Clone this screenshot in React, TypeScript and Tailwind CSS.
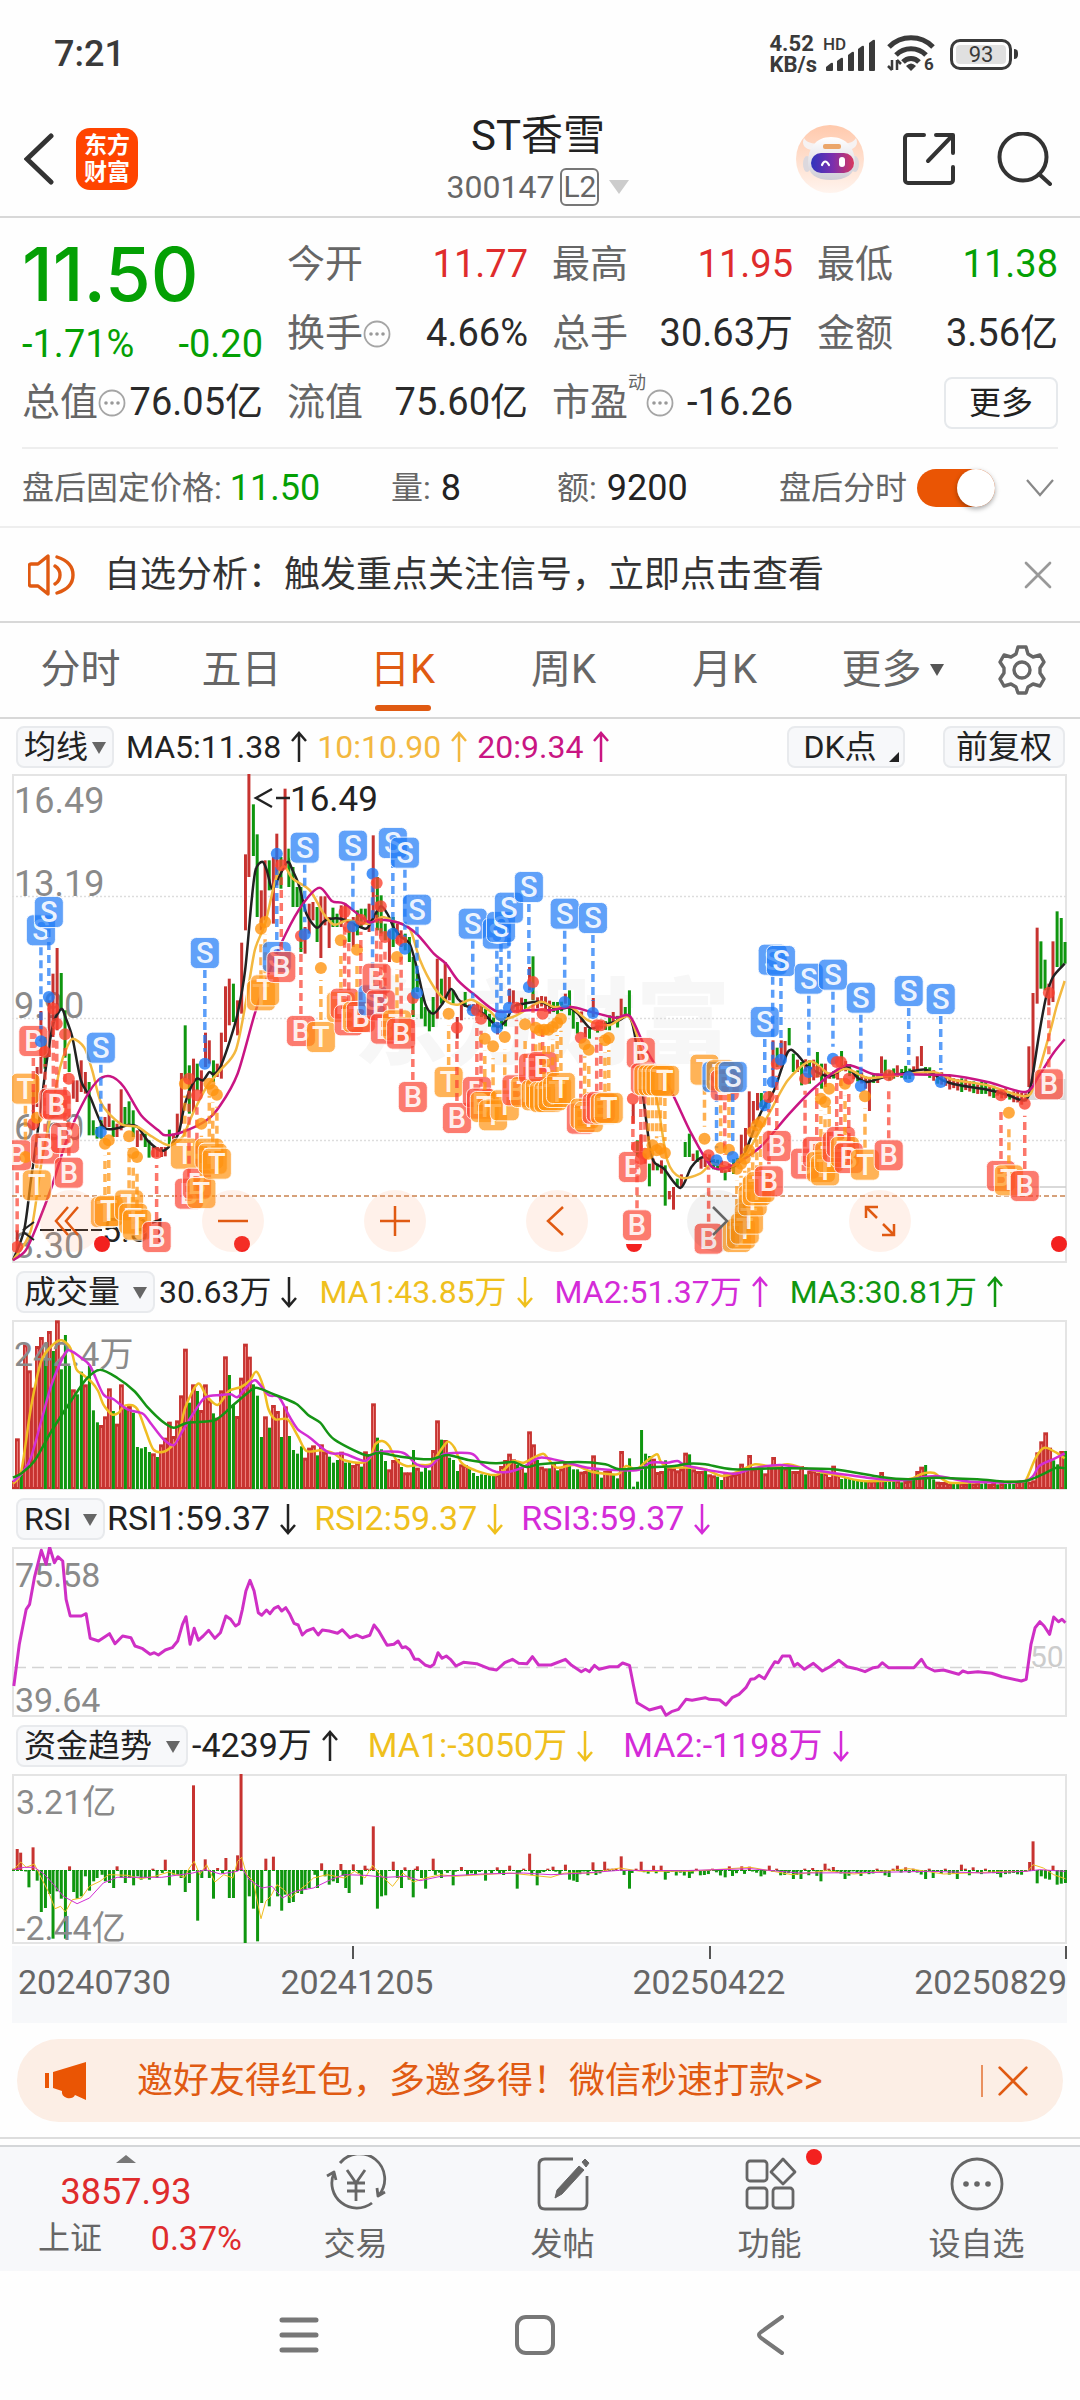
import type { ReactNode } from "react"

type Point = [number, number]
type Kind = "S" | "B" | "T"
type Marker = [Kind, number, number, number]

const RED = "#c73330"
const GREEN = "#0f960f"

// "x,y x,y ..." where a leading + shifts x by half a chart
function parse(src: string): Point[] {
  return src
    .trim()
    .split(/\s+/)
    .map((pair) => {
      const [x, y] = pair.split(",")
      return [x.startsWith("+") ? 1568 + Number(x) : Number(x), Number(y)] as Point
    })
}

// raw samples -> svg units of a 1055 wide panel
const px = (x: number) => (x - 35) / 2.904
const py = (y: number) => (y - 11) / 3
const vy = (y: number) => (y - 177) / 3
const wx = (x: number) => x / 1.452 - 12

function straight(points: Point[]) {
  return points.map(([x, y], i) => `${i ? "L" : "M"}${x.toFixed(1)} ${y.toFixed(1)}`).join("")
}

function smooth(points: Point[]) {
  let d = `M${points[0][0].toFixed(1)} ${points[0][1].toFixed(1)}`
  for (let i = 1; i < points.length; i++) {
    const p0 = points[i - 2] ?? points[i - 1]
    const p1 = points[i - 1]
    const p2 = points[i]
    const p3 = points[i + 1] ?? p2
    const c = [
      p1[0] + (p2[0] - p0[0]) / 7,
      p1[1] + (p2[1] - p0[1]) / 7,
      p2[0] - (p3[0] - p1[0]) / 7,
      p2[1] - (p3[1] - p1[1]) / 7,
      p2[0],
      p2[1],
    ].map((n) => n.toFixed(1))
    d += `C${c.join(" ")}`
  }
  return d
}

const noise = (n: number) => {
  const v = Math.sin(n * 127.1) * 43758.5453
  return v - Math.floor(v)
}

const MA5 = parse(`38,1470 70,1380 90,1230 110,1080 135,880 155,760 178,716 190,740 210,800 235,930 262,980
  300,1070 340,1074 372,1064 400,1070 430,1112 470,1142 500,1120 520,1085 535,1010 555,950 572,925 590,930
  608,905 620,912 640,890 668,810 690,730 712,600 730,400 742,300 762,274 775,300 790,355 810,320 835,275
  850,300 870,350 890,430 920,472 945,450 990,445 1060,475 1080,450 1105,408 1125,430 1145,475 1165,500
  1190,520 1210,590 1235,700 1258,730 1285,700 1310,656 1330,685 1350,705 1390,720 1420,745 1445,770
  1470,750 1490,710 1520,700 1568,695 +50,715 +85,712 +110,730 +145,773 +180,765 +230,750 +258,736
  +275,790 +300,980 +325,1160 +360,1195 +408,1253 +440,1190 +475,1160 +520,1185 +560,1190 +590,1160
  +640,1030 +680,960 +720,845 +745,850 +780,890 +840,918 +890,890 +920,920 +950,935 +1000,920 +1050,910
  +1120,898 +1170,930 +1220,945 +1300,958 +1360,975 +1408,990 +1425,950 +1450,790 +1470,680 +1490,620 +1524,580`)

const MA10 = parse(`38,1470 90,1380 120,1180 150,1020 175,890 195,830 212,805 245,832 268,900 295,1000 350,1060
  400,1070 440,1098 490,1125 530,1100 560,1030 600,950 640,900 685,840 715,690 740,540 770,460 800,330
  825,288 850,325 900,360 940,430 970,463 1010,450 1070,460 1110,440 1150,455 1190,475 1220,570 1260,650
  1300,695 1330,703 1370,688 1420,720 1450,747 1500,735 1568,695 +40,710 +90,710 +140,750 +200,765 +260,740
  +300,860 +340,990 +370,1170 +410,1222 +465,1210 +500,1180 +550,1190 +600,1150 +660,1040 +720,930 +785,873
  +840,910 +890,895 +950,922 +1010,918 +1140,905 +1200,928 +1300,945 +1410,978 +1440,930 +1480,790 +1500,710 +1524,632`)

const MA20 = parse(`38,1470 75,1440 110,1360 150,1250 190,1120 235,1010 280,935 320,918 360,950 410,1035 460,1080
  480,1095 530,1085 600,1050 640,1005 690,910 740,730 780,610 830,490 880,400 928,352 965,393 1000,400
  1070,455 1100,448 1160,458 1210,490 1260,550 1295,580 1330,630 1380,675 1440,722 1500,722 1568,718 +30,720
  +90,710 +150,725 +220,742 +262,738 +310,840 +380,960 +440,1090 +500,1190 +560,1185 +640,1130 +720,1035
  +800,950 +890,885 +970,912 +1060,912 +1190,915 +1300,935 +1410,965 +1450,915 +1490,850 +1524,807`)

// colour, x, high, low
const KEY_CANDLES = `r,50,1380,1450 r,97,960,1080 r,108,890,1010 r,119,722,910 g,131,800,895 r,143,690,860 r,154,610,800 r,166,533,780
  g,178,608,720 g,189,720,862 g,201,850,905 r,213,930,985 r,224,930,995 r,236,870,965 r,248,905,970
  g,259,935,1095 g,271,1050,1095 g,282,1070,1105 g,294,1050,1105 r,305,1040,1075 r,317,1000,1070
  g,329,1050,1100 r,340,1060,1100 r,352,957,1080 g,363,1010,1070 g,375,993,1070 g,387,1020,1100
  r,399,1080,1130 r,410,1090,1110 g,422,1090,1130 g,433,1110,1162 r,445,1130,1160 r,457,1130,1160
  r,469,1130,1160 r,480,1130,1158 g,492,1078,1130 r,504,1090,1120 r,515,1030,1090 r,527,908,1060
  g,538,765,930 g,550,885,1030 r,562,865,1025 g,573,880,960 r,585,900,970 r,597,787,890 r,608,810,880
  g,620,870,935 r,631,880,920 r,643,787,925 r,655,648,815 r,666,625,765 g,678,640,755 r,690,690,795
  r,702,517,730 r,713,252,480 r,723,11,320 g,736,102,257 g,747,192,440 r,759,360,480 r,770,270,450
  g,782,270,360 r,794,260,460 r,804,190,345 g,816,260,355 r,828,55,290 g,839,235,350 g,851,290,410
  g,863,350,410 g,874,350,545 r,886,470,550 r,898,400,490 r,909,395,450 g,921,410,515 r,932,378,563
  r,944,378,465 r,956,440,533 g,967,412,470 g,979,430,470 r,991,405,470 r,1003,400,450 g,1014,450,515
  r,1026,440,530 g,1038,420,495 g,1049,415,470 g,1061,415,460 r,1072,400,485 r,1084,195,450 g,1096,320,480
  g,1107,375,490 g,1119,460,510 r,1131,480,575 g,1142,440,530 r,1154,460,520 r,1165,480,530 g,1177,490,540
  g,1189,500,575 g,1200,560,740 g,1212,600,665 g,1224,680,745 g,1235,710,768 g,1247,720,783 g,1258,680,770
  r,1270,565,745 g,1282,625,700 r,1293,575,690 r,1305,620,690 g,1316,660,700 r,1328,740,805 r,1340,690,750
  g,1351,665,710 r,1480,655,700 r,1491,660,700 r,1538,590,660 g,1548,558,690 r,+74,670,700 g,+86,660,735
  g,+97,720,775 g,+109,755,790 r,+132,770,800 g,+144,775,805 r,+155,683,740 r,+213,725,760 r,+236,685,745
  g,+248,710,740 g,+260,660,740 r,+271,1000,1060 g,+283,1110,1170 r,+294,1092,1150 r,+306,1150,1180
  g,+318,1180,1248 r,+329,1165,1200 g,+341,1180,1200 r,+353,1170,1210 g,+364,1185,1306 r,+376,1262,1287
  r,+388,1250,1318 g,+399,1225,1250 r,+411,1212,1250 g,+422,1115,1160 g,+434,1090,1160 r,+445,1150,1172
  g,+457,1140,1175 r,+468,1160,1195 r,+480,1150,1190 g,+538,1200,1230 r,+550,1180,1205 r,+585,1093,1170
  r,+597,1073,1150 r,+608,963,1090 r,+620,992,1060 r,+632,968,1020 g,+643,968,1010 r,+677,810,950
  g,+689,832,890 r,+701,810,890 r,+712,812,865 g,+724,773,825 g,+736,850,905 r,+748,868,905 g,+760,875,945
  g,+783,870,940 r,+795,868,930 g,+806,845,920 g,+818,880,955 r,+829,880,950 g,+876,842,900 r,+957,925,1022
  r,+992,858,910 g,+1003,868,915 r,+1038,885,920 r,+1096,858,900 r,+1108,827,887 g,+1120,890,910
  r,+1420,828,950 r,+1432,668,940 r,+1444,472,700 g,+1455,513,655 g,+1467,568,660 r,+1478,640,705
  r,+1490,513,695 g,+1502,423,590 g,+1514,443,590 g,+1525,515,580`
  .split(/\s+/)
  .map((row) => {
    const [c, x, high, low] = row.split(",")
    return { color: c === "r" ? RED : GREEN, x: x.startsWith("+") ? 1568 + Number(x) : Number(x), high: Number(high), low: Number(low) }
  })

function valueAt(points: Point[], x: number) {
  const i = Math.max(1, points.findIndex((p) => p[0] >= x))
  const [x0, y0] = points[i - 1]
  const [x1, y1] = points[i]
  return y0 + ((y1 - y0) * (x - x0)) / (x1 - x0)
}

// quiet days hug the five day average
const QUIET_CANDLES = Array.from({ length: 263 }, (_, i) => 39 + i * 11.62)
  .filter((x) => x > 1340 && x < 3080 && !KEY_CANDLES.some((c) => Math.abs(c.x - x) < 8))
  .map((x, i) => {
    const mid = valueAt(MA5, x)
    return { color: noise(i + 4) > 0.5 ? RED : GREEN, x, high: mid - 8 - noise(i) * 16, low: mid + 8 + noise(i + 50) * 16 }
  })

const CANDLES = [...KEY_CANDLES, ...QUIET_CANDLES]

// x, badge y, signal y
const SIGNALS: Record<Kind, string> = {
  S: `119,480,813 142,425,680 293,832,1085 595,548,880 804,560,250 885,232,492 1025,226,468 1141,218,490
    1176,247,535 1211,418,668 1082,690,310 1373,460,720 1443,490,772 1455,470,735 1478,412,712 1536,350,650
    +72,430,695 +154,443,728 +513,920,1170 +560,920,1160 +653,755,1005 +676,568,935 +700,572,868
    +781,625,905 +851,613,865 +932,682,947 +1071,662,920 +1164,686,935`,
  B: `50,1155,1430 97,812,1060 131,1135,845 155,1000,715 165,1003,760 189,1103,792 200,1207,925
    455,1400,1148 549,1270,925 572,1240,975 817,590,285 874,782,497 1001,700,425 1013,750,470 1048,740,448
    1094,625,338 1106,705,408 1118,775,500 1165,790,510 1199,980,683 1327,1043,772 1385,965,720
    1397,1000,745 1500,960,712 1548,895,635 +8,890,730 +119,1045,802 +165,1015,765 +177,1010,765
    +270,1190,985 +282,1365,1130 +293,848,1165 +305,925,1150 +490,1405,1155 +537,945,1190 +665,1233,980
    +688,1127,880 +770,1180,925 +804,1145,905 +862,1130,875 +874,1115,875 +897,1163,925 +1013,1155,915
    +1339,1217,975 +1408,1247,1000 +1478,942,667`,
  T: `74,955,1160 107,1245,1042 305,1325,1120 316,1322,1110 375,1305,1098 387,1345,1148 398,1363,1160
    537,1150,940 585,1268,1060 608,1150,940 618,1165,960 630,1180,973 758,675,475 770,660,455 932,800,593
    990,710,510 1037,740,538 1153,765,560 1303,935,730 1408,1010,805 1432,1035,828 1466,1005,800
    1525,965,762 1556,975,772 +0,970,780 +12,980,778 +25,980,778 +37,975,770 +50,965,758 +61,953,745
    +130,1030,822 +142,1040,838 +189,1015,810 +200,1013,803 +315,930,1150 +327,930,1125 +339,930,1140
    +350,930,1135 +363,932,1148 +478,898,1105 +525,915,1133 +549,920,1138 +572,1400,1195 +584,1390,1180
    +595,1375,1165 +607,1345,1140 +618,1290,1085 +630,1260,1065 +641,1250,1055 +816,1190,985 +828,1200,995
    +840,1160,955 +886,1145,940 +944,1183,978 +1362,1230,1027`,
}

const SIGNAL_COLORS: Record<Kind, string> = { S: "#1c79f7", B: "#fb4332", T: "#ff930f" }

const MARKERS: Marker[] = (Object.keys(SIGNALS) as Kind[])
  .flatMap((kind) =>
    SIGNALS[kind].split(/\s+/).map((row): Marker => {
      const [x, badge, dot] = row.split(",")
      return [kind, x.startsWith("+") ? 1568 + Number(x) : Number(x), Number(badge), Number(dot)]
    }),
  )
  .sort((a, b) => a[1] - b[1])

// colour + bar top, one per trading day
const VOLUME = `r660 r532 g640 r250 r328 r380 r255 r228 g290 r210 g270 r178 g325 g222 g315 r385 g400 g332 r370 g315
  g448 g484 r492 r466 r382 g450 r488 r370 g440 r435 g455 g558 g562 g558 g573 r577 g588 r550 r530 r482 r525
  r478 r403 r263 g425 r370 g390 r447 r370 r418 g457 r470 r388 r286 g342 g430 r465 r350 r248 r287 g370 g404
  g528 r466 g500 r432 r450 g528 r436 g525 g567 g578 g556 r590 r560 r553 g583 r550 r572 g587 g605 g597 r572
  g605 g603 r612 r605 g617 r571 g580 r427 g530 g565 g600 r625 r597 r594 g618 r634 r634 g567 r620 g632 g614
  g628 r567 r478 g536 r537 g590 g597 g630 r610 r612 g618 g636 g645 g640 g642 g642 g642 r640 r615 r597 r578
  r595 g612 r617 g635 r511 r550 g597 r617 r622 g622 r603 g628 r622 r605 g610 g625 g625 r632 r630 g632 r583
  g628 g650 r630 r630 g640 g652 r570 g625 g592 g677 g662 g507 g578 g585 r593 r633 r630 g598 r620 r622 r628
  r622 r575 g580 r625 r630 r630 g625 r640 r643 g647 g657 r640 r640 r640 r636 r608 r620 r582 r622 r618 g618
  r637 r615 r588 r612 g612 r620 g622 r630 r630 r615 g640 r630 r628 r635 g637 r636 r648 r614 r640 g654 g648
  g654 g654 g658 g660 g663 r658 r658 g663 r633 g655 g658 g658 r658 g664 r660 r658 g655 r630 r617 g612 g650
  g655 r662 r663 r663 r668 g665 g668 r665 r668 g664 r667 r664 g668 g666 r669 r666 g670 r667 g669 g666 g668
  r660 r657 g663 r662 r658 r574 r541 r514 r560 g598 g610 r570 g570 r592 g620`
  .split(/\s+/)
  .map((s) => ({ up: s[0] === "r", top: Number(s.slice(1)) }))

const VOL_MA1 = parse(`38,668 62,630 90,440 120,300 155,250 180,238 205,262 222,325 240,340 265,362 285,390 300,430
  325,460 345,455 360,435 385,433 402,450 420,500 445,565 475,572 505,550 520,525 538,440 575,368 600,405
  632,432 665,390 700,378 725,360 745,332 765,378 780,445 800,475 835,475 865,525 890,570 930,568 965,575
  1000,598 1050,605 1075,590 1090,550 1110,540 1130,555 1150,595 1180,615 1215,612 1250,610 1275,575
  1300,542 1320,560 1340,605 1380,628 1440,642 1470,620 1490,600 1520,605 1550,590 +10,578 +25,595 +50,620
  +100,612 +150,632 +225,640 +250,615 +280,625 +310,600 +340,580 +350,600 +370,618 +440,620 +480,625
  +530,645 +580,630 +625,610 +680,618 +720,610 +780,625 +850,640 +940,660 +1070,655 +1110,638 +1145,636
  +1190,665 +1300,662 +1400,662 +1415,650 +1440,590 +1465,560 +1500,575 +1524,592`)

const VOL_MA2 = parse(`38,662 65,635 90,590 120,480 150,370 190,275 210,272 235,290 262,315 300,400 330,415 370,445
  415,458 440,490 475,535 505,552 530,510 560,460 595,410 640,402 670,400 690,408 715,380 742,358 780,402
  810,408 840,465 865,505 900,530 955,575 1000,578 1060,600 1090,575 1170,575 1210,610 1250,615 1290,580
  1370,578 1400,610 1440,632 1480,632 1520,618 1568,590 +60,600 +150,622 +280,628 +320,605 +370,605
  +400,600 +430,615 +560,638 +620,622 +700,612 +800,628 +950,650 +1050,658 +1150,645 +1250,662 +1410,660
  +1450,615 +1490,595 +1524,577`)

const VOL_MA3 = parse(`38,650 65,635 100,600 150,510 200,430 250,355 290,326 340,350 390,390 430,440 470,480 505,500
  545,485 625,477 680,430 720,395 745,380 800,402 860,428 895,462 930,485 970,535 1060,582 1100,575
  1170,588 1250,595 1300,582 1360,597 1440,607 1490,603 1530,618 1568,610 +110,603 +190,610 +230,625
  +300,620 +390,615 +430,608 +480,610 +560,625 +700,622 +850,625 +990,648 +1070,655 +1150,650 +1270,655
  +1350,662 +1410,660 +1460,640 +1500,620 +1524,622`)

const RSI = parse(`20,555 28,430 38,325 43,310 50,230 60,148 67,190 72,138 79,185 84,167 91,180 96,295 102,345 118,345
  125,338 131,412 143,420 159,398 167,428 178,405 190,410 196,435 207,443 218,460 224,455 230,462 240,447
  250,440 258,420 265,370 270,347 276,430 282,382 288,418 295,405 303,388 312,412 320,395 328,345 335,355
  342,375 347,368 352,325 357,270 363,238 369,270 375,335 380,343 387,327 392,338 398,322 404,316 409,330
  415,320 421,340 427,367 433,372 439,402 445,390 455,382 462,402 468,387 478,390 490,397 497,386 508,410
  518,402 526,410 537,403 543,372 550,390 562,433 572,430 578,420 584,440 589,437 595,447 602,475 608,475
  618,493 625,497 630,490 636,455 642,472 648,465 654,475 662,495 673,484 692,488 710,503 721,507 733,485
  744,475 753,487 765,488 773,467 782,492 800,492 821,475 830,493 844,512 850,505 856,512 863,493 870,505
  885,497 897,497 904,486 914,493 920,555 925,605 943,627 960,617 967,643 975,632 985,625 996,595 1005,598
  1024,590 1030,595 1045,597 1054,612 1063,590 1073,580 1083,560 1090,535 1096,533 1102,523 1110,533
  1118,505 1125,482 1130,485 1136,465 1147,465 1153,495 1158,487 1168,505 1181,487 1194,510 1205,497
  1218,478 1230,497 1243,503 1256,512 1268,500 1275,498 1281,485 1290,500 1327,500 1338,475 1345,498
  1357,510 1370,507 1392,520 1398,510 1405,515 1420,512 1440,517 1455,527 1483,540 1490,535 1497,430
  1503,380 1510,362 1516,375 1524,400 1530,348 1537,362 1542,355 1547,365`)

const FLOW = parse(`25,413 30,424 48,408 101,465 170,465 222,472 240,445 281,222 298,444 316,470 328,440 345,432 350,188
  386,442 397,436 467,456 495,458 513,459 530,463 542,345 571,451 588,468 606,465 629,442 670,467 722,468 740,463
  769,427 803,466 821,460 861,453 878,451 902,435 931,451 949,463 960,463 1059,465 1077,465 1088,466 1117,463
  1180,470 1198,457 1210,467 1303,463 1315,468 1396,460 1413,468 1500,390 1495,452 1529,463 42,528 54,508 60,602 66,590
  72,548 77,682 83,540 89,562 95,682 107,542 112,562 118,555 124,495 130,538 136,510 141,500 153,510
  159,515 165,530 176,500 182,515 188,500 194,522 200,495 205,505 211,500 217,505 228,500 246,522 252,490
  258,490 263,500 269,542 275,515 287,628 293,500 304,500 310,562 333,560 339,560 356,695 362,555 368,592
  374,690 380,575 391,585 403,555 409,598 414,550 420,575 426,572 432,545 438,548 443,535 449,530 461,530
  472,495 478,520 484,510 490,515 502,530 507,545 525,520 548,592 554,555 560,552 577,500 583,530 600,558
  594,505 612,500 618,532 641,500 658,522 705,508 751,532 780,522 827,505 833,508 838,512 914,532 966,505 1001,500
  1053,498 1105,495 1152,503 1163,503 1192,510 1227,503 1291,497 1344,503 1355,500 1390,503 1453,498 1506,516 1512,495
  1518,502 1524,505 1535,520 1541,517 1547,515`)

const SMALL_FLOW: Point[] = Array.from({ length: 262 }, (_, i) => 20 + i * 5.83)
  .filter((x) => !FLOW.some((p) => Math.abs(p[0] - x) < 3))
  .map((x, i) => [x, noise(i) > 0.25 ? 480 + noise(i + 9) * 14 : 472])

const FLOW_MA1 = parse(`20,475 30,452 38,468 50,458 60,500 70,540 80,592 88,585 95,602 105,565 118,560 130,525 145,510 158,490
  185,492 205,502 225,495 245,482 268,498 275,470 282,450 290,490 300,460 312,512 325,490 338,500 345,450
  351,438 358,490 368,510 374,575 379,622 386,570 393,555 402,520 412,535 422,560 432,540 445,520 455,500
  475,490 500,500 515,480 530,500 541,462 552,490 570,525 585,485 600,512 618,500 640,490 660,495 700,490
  740,485 800,498 820,485 860,485 900,470 930,480 1000,480 1090,468 1150,490 1200,478 1240,488 1320,472
  1370,488 1440,482 1492,480 1500,460 1515,470 1530,490 1547,502`)

const FLOW_MA2 = parse(`20,475 35,468 50,468 65,490 78,520 92,555 112,577 130,560 150,515 170,498 205,498 235,498 280,485
  298,475 320,488 345,480 351,470 362,505 380,530 395,525 410,560 428,540 455,530 480,505 500,490 530,492
  560,498 590,495 610,508 640,495 700,488 760,485 800,490 850,485 900,477 990,478 1090,472 1160,485 1250,484
  1350,480 1430,485 1490,480 1510,475 1547,480`)

function Close({ className }: { className: string }) {
  return (
    <svg viewBox="0 0 24 24" className={className} fill="none" stroke="currentColor" strokeLinecap="round">
      <path d="M4 4l16 16M20 4L4 20" />
    </svg>
  )
}

function Arrow({ up = false }: { up?: boolean }) {
  return (
    <svg viewBox="0 0 16 32" className="mx-2.5 h-8 w-4 shrink-0" fill="none" stroke="currentColor" strokeWidth="2.5">
      {up ? <path d="M8 31V2M1 10L8 2l7 8" /> : <path d="M8 1v29M1 22l7 8 7-8" />}
    </svg>
  )
}

function Reading({ text, up, className }: { text: string; up?: boolean; className: string }) {
  return (
    <span className={`flex items-center ${className}`}>
      {text}
      <Arrow up={up} />
    </span>
  )
}

function IndicatorSelect({ label, options, className }: { label: string; options: string[]; className: string }) {
  return (
    <div className={`relative shrink-0 ${className}`}>
      <select
        aria-label={label}
        className="block h-[42px] w-full appearance-none rounded-lg border-2 border-[#e8eaed] bg-[#f7f8fa] pl-1.5 text-[32px] leading-[38px] text-[#222]"
      >
        {options.map((option) => (
          <option key={option}>{option}</option>
        ))}
      </select>
      <svg viewBox="0 0 14 12" className="pointer-events-none absolute right-2 top-4 h-3 w-3.5" fill="#666">
        <path d="M0 0h14L7 12z" />
      </svg>
    </div>
  )
}

function InfoDots() {
  return (
    <svg viewBox="0 0 28 28" className="size-7 shrink-0" fill="none" stroke="#a5a5a5" strokeWidth="1.8">
      <circle cx="14" cy="14" r="12.5" />
      <g fill="#999" stroke="none">
        <circle cx="8" cy="14" r="1.8" />
        <circle cx="14" cy="14" r="1.8" />
        <circle cx="20" cy="14" r="1.8" />
      </g>
    </svg>
  )
}

function Quote({ label, value, tone = "text-[#2a2a2a]", info = false, sup }: { label: string; value: string; tone?: string; info?: boolean; sup?: string }) {
  return (
    <dl className="flex items-center whitespace-nowrap text-[38px]">
      <dt className="flex items-center text-[#666]">
        {label}
        {sup && <sup className="-top-5 text-[18px]">{sup}</sup>}
        {info && <InfoDots />}
      </dt>
      <dd className={`ml-auto ${tone}`}>{value}</dd>
    </dl>
  )
}

function StatusBar() {
  return (
    <div className="flex h-[108px] items-center pl-[54px] pr-[62px] text-[#3a3a3a]">
      <span className="text-[36px] font-medium">7:21</span>
      <div className="ml-auto flex items-center">
        <div className="text-[22px] font-bold leading-[21px]">
          4.52
          <br />
          KB/s
        </div>
        <svg viewBox="0 0 56 36" className="ml-1.5 h-9 w-14" fill="currentColor">
          <text x="0" y="14" fontSize="17" fontWeight="500">HD</text>
          <path d="M3 34v-3l5-4q2-1 2 1v6q0 1-1 1H4q-1 0-1-1z" />
          <path d="M14 34V25l4-3q2-1 2 1v11q0 1-1 1h-4q-1 0-1-1z" />
          <path d="M25 34V19l4-3q2-1 2 1v17q0 1-1 1h-4q-1 0-1-1z" />
          <path d="M35 34V13l4-3q2-1 2 1v23q0 1-1 1h-4q-1 0-1-1z" />
          <path d="M46 34V7l4-3q2-1 2 1v29q0 1-1 1h-4q-1 0-1-1z" />
        </svg>
        <svg viewBox="0 0 48 38" className="ml-2 h-[38px] w-12" fill="none" stroke="currentColor" strokeWidth="5">
          <path d="M2 12a31 31 0 0 1 44 0M9 20a21 21 0 0 1 30 0M16 27a11 11 0 0 1 16 0" />
          <path d="M19 31l5 5 5-5q-5-5-10 0z" fill="currentColor" stroke="none" />
          <path d="M5 25v10M10 35V25M1 31l4 4M14 29l-4-4" strokeWidth="2.5" />
          <text x="37" y="35" fontSize="17" fontWeight="700" fill="currentColor" stroke="none">6</text>
        </svg>
        <div className="ml-[15px] flex h-[31px] w-[62px] items-center rounded-[10px] border-[3px] border-current p-[3px]">
          <span className="w-full rounded-sm bg-[#e0e0e0] text-center text-[22px] leading-[19px]">93</span>
        </div>
        <span className="ml-0.5 h-2.5 w-1 rounded-r bg-current" />
      </div>
    </div>
  )
}

function Header() {
  return (
    <header className="grid h-[110px] grid-cols-3 items-center border-b-2 border-[#d8d8d8] pb-3 pl-6 pr-7">
      <div className="flex items-center">
        <button type="button" aria-label="返回" className="w-[52px] text-[#333]">
          <svg viewBox="0 0 30 52" className="h-[52px] w-[30px]" fill="none" stroke="currentColor" strokeWidth="5" strokeLinecap="round">
            <path d="M27 3L3 26l24 23" />
          </svg>
        </button>
        <a href="#home" className="flex size-[62px] items-center justify-center rounded-[14px] bg-[#ff4400] text-center text-[23px] font-bold leading-[27px] text-white">
          <span>
            东方
            <br />
            财富
          </span>
        </a>
      </div>
      <button type="button" className="flex flex-col items-center whitespace-nowrap">
        <span className="text-[42px] leading-[56px] text-[#222]">ST香雪</span>
        <span className="flex items-center text-[32px] leading-[46px] text-[#666]">
          300147
          <span className="ml-1.5 rounded-md border-2 border-[#777] px-px text-[30px] leading-[34px]">L2</span>
          <svg viewBox="0 0 20 14" className="ml-2.5 h-3.5 w-5" fill="#ccc">
            <path d="M0 0h20L10 14z" />
          </svg>
        </span>
      </button>
      <div className="flex items-center justify-end">
        <button type="button" aria-label="助手">
          <svg viewBox="0 0 68 68" className="size-[68px]">
            <defs>
              <linearGradient id="halo" x2="0" y2="1">
                <stop offset="0" stopColor="#ffc9ac" />
                <stop offset="1" stopColor="#fff4ee" />
              </linearGradient>
              <linearGradient id="visor" x2="1" y2="0">
                <stop offset="0" stopColor="#2f35bd" />
                <stop offset=".5" stopColor="#7a2fae" />
                <stop offset="1" stopColor="#d8385e" />
              </linearGradient>
              <linearGradient id="shell" x2="0" y2="1">
                <stop offset="0" stopColor="#fff" />
                <stop offset="1" stopColor="#cfcdd6" />
              </linearGradient>
            </defs>
            <circle cx="34" cy="34" r="34" fill="url(#halo)" />
            <path d="M16 25c-7-1-11-5-8-12 2 4 7 5 12 6zM52 25c7-1 11-5 8-12-2 4-7 5-12 6z" fill="#f6f2f2" />
            <ellipse cx="11" cy="39" rx="4" ry="8" fill="#dcd8dd" />
            <ellipse cx="59" cy="39" rx="4" ry="8" fill="#dcd8dd" />
            <path d="M12 38c0-15 8-26 23-26s24 11 24 26c0 11-9 17-24 17s-23-6-23-17z" fill="url(#shell)" />
            <rect x="27" y="19" width="18" height="5" rx="2" fill="#eba66a" />
            <rect x="15" y="28" width="43" height="20" rx="10" fill="url(#visor)" />
            <path d="M26 40q3-7 7 0" fill="none" stroke="#fff" strokeWidth="2.2" strokeLinecap="round" />
            <rect x="43" y="32" width="6" height="10" rx="3" fill="#fff" />
          </svg>
        </button>
        <button type="button" aria-label="分享" className="ml-[38px] text-[#333]">
          <svg viewBox="0 0 54 54" className="size-[54px]" fill="none" stroke="currentColor" strokeWidth="4" strokeLinecap="round" strokeLinejoin="round">
            <path d="M22 3H6a3 3 0 0 0-3 3v42a3 3 0 0 0 3 3h42a3 3 0 0 0 3-3V35M34 3h17v18M50 4L26 29" />
          </svg>
        </button>
        <button type="button" aria-label="搜索" className="ml-10 text-[#333]">
          <svg viewBox="0 0 56 54" className="h-[54px] w-14" fill="none" stroke="currentColor" strokeWidth="4" strokeLinecap="round">
            <circle cx="27" cy="25" r="23.5" />
            <path d="M43 42l11 10" />
          </svg>
        </button>
      </div>
    </header>
  )
}

function QuotePanel() {
  return (
    <section className="px-[22px] pt-3">
      <div className="grid grid-cols-4 grid-rows-[69px_69px_69px] gap-x-6">
        <div className="row-span-2 whitespace-nowrap text-[#04a004]">
          <strong className="mt-1 block font-['Inter'] text-[74px] font-medium leading-[80px]">11.50</strong>
          <div className="flex justify-between text-[38px] leading-[60px]">
            <span>-1.71%</span>
            <span>-0.20</span>
          </div>
        </div>
        <Quote label="今开" value="11.77" tone="text-[#df2c2c]" />
        <Quote label="最高" value="11.95" tone="text-[#df2c2c]" />
        <Quote label="最低" value="11.38" tone="text-[#04a004]" />
        <Quote label="换手" value="4.66%" info />
        <Quote label="总手" value="30.63万" />
        <Quote label="金额" value="3.56亿" />
        <Quote label="总值" value="76.05亿" info />
        <Quote label="流值" value="75.60亿" />
        <Quote label="市盈" value="-16.26" sup="动" info />
        <div className="flex items-center justify-end">
          <button type="button" className="h-[52px] w-[114px] rounded-lg border-2 border-[#e6e9ec] text-[32px] leading-[46px] text-[#222]">
            更多
          </button>
        </div>
      </div>
      <div className="mt-2.5 grid h-[79px] grid-cols-[369fr_166fr_222fr_279fr] items-center whitespace-nowrap border-t-2 border-[#eee] text-[32px] text-[#666]">
        <div className="flex items-center gap-2">
          盘后固定价格:
          <span className="text-[36px] text-[#04a004]">11.50</span>
        </div>
        <div className="flex items-center gap-2.5">
          量: <span className="text-[36px] text-[#222]">8</span>
        </div>
        <div className="flex items-center gap-2.5">
          额: <span className="text-[36px] text-[#222]">9200</span>
        </div>
        <div className="flex items-center">
          <label className="flex items-center gap-2.5">
            盘后分时
            <input type="checkbox" role="switch" defaultChecked className="peer sr-only" />
            <span className="flex h-[38px] w-[78px] justify-start rounded-full bg-[#ddd] peer-checked:justify-end peer-checked:bg-[#ea5504]">
              <span className="size-[38px] rounded-full bg-white shadow-[0_2px_5px_rgba(0,0,0,0.35)]" />
            </span>
          </label>
          <button type="button" aria-label="展开" className="ml-auto mr-1 text-[#888]">
            <svg viewBox="0 0 28 18" className="h-[18px] w-7" fill="none" stroke="currentColor" strokeWidth="2.2">
              <path d="M1 1l13 15L27 1" />
            </svg>
          </button>
        </div>
      </div>
    </section>
  )
}

function AlertBar() {
  return (
    <div className="flex h-[97px] items-center border-y-2 border-t-[#eee] border-b-[#d8d8d8] pl-7 pr-6">
      <svg viewBox="0 0 48 42" className="h-[42px] w-12 text-[#e05a12]" fill="none" stroke="currentColor" strokeWidth="3.4" strokeLinejoin="round" strokeLinecap="round">
        <path d="M3 10h7L20 2v38l-10-8H3q-2 0-2-3V13q0-3 2-3zM27 12q5 3 5 9t-5 9M29 3q16 5 16 18T29 39" />
      </svg>
      <a href="#alert" className="ml-7 whitespace-nowrap text-[36px] text-[#333]">
        自选分析：触发重点关注信号，立即点击查看
      </a>
      <button type="button" aria-label="关闭" className="ml-auto text-[#999]">
        <Close className="size-9 stroke-[1.8]" />
      </button>
    </div>
  )
}

const PERIODS = ["分时", "五日", "日K", "周K", "月K"]

function PeriodTabs() {
  return (
    <nav className="grid h-[96px] grid-cols-[161fr_161fr_161fr_161fr_161fr_175fr_100fr] border-b-2 border-[#d8d8d8] text-[40px] text-[#666]">
      {PERIODS.map((period) =>
        period === "日K" ? (
          <button key={period} type="button" aria-current="page" className="relative text-[#e05a12]">
            {period}
            <span className="absolute bottom-1.5 left-1/2 h-1.5 w-14 -translate-x-1/2 rounded-full bg-current" />
          </button>
        ) : (
          <button key={period} type="button">
            {period}
          </button>
        ),
      )}
      <button type="button" className="flex items-center justify-center gap-2">
        更多
        <svg viewBox="0 0 14 12" className="h-3 w-3.5" fill="#555">
          <path d="M0 0h14L7 12z" />
        </svg>
      </button>
      <button type="button" aria-label="设置" className="flex items-center">
        <svg viewBox="0 0 48 50" className="ml-[18px] h-[50px] w-12" fill="none" stroke="#666" strokeWidth="3.4" strokeLinejoin="round">
          <path d="M20 2h8l2 7 5 3 7-2 4 7-4 6v5l4 6-4 7-7-2-5 3-2 6h-8l-2-6-5-3-7 2-4-7 4-6v-5l-4-6 4-7 7 2 5-3z" />
          <circle cx="24" cy="25" r="8" />
        </svg>
      </button>
    </nav>
  )
}

function SignalMarkers() {
  return (
    <g>
      {MARKERS.map(([kind, x, badge, dot], i) => {
        const cx = px(x)
        const by = py(badge)
        const dy = py(dot)
        const dir = dy > by ? 1 : -1
        return (
          <g key={i}>
            <path d={`M${cx} ${by + dir * 17}V${dy - dir * 12}`} stroke={SIGNAL_COLORS[kind]} strokeOpacity="0.72" strokeWidth="3.5" strokeDasharray="8 5" />
            <circle cx={cx} cy={dy} r="6" fill={SIGNAL_COLORS[kind]} fillOpacity="0.8" />
            <rect x={cx - 14.5} y={by - 15.5} width="29" height="31" rx="6" fill={SIGNAL_COLORS[kind]} fillOpacity="0.7" stroke="#fff" strokeOpacity="0.8" strokeWidth="1" />
            <text x={cx} y={by + 10} textAnchor="middle" fontSize="29" fontWeight="500" fill="#fff" fillOpacity="0.9">
              {kind}
            </text>
          </g>
        )
      })}
    </g>
  )
}

const TOOLS: { name: string; tone: string; icon: ReactNode }[] = [
  { name: "最早", tone: "bg-[#fd8b54]/12 text-[#e05a12]", icon: <path d="M28 17L16 31l12 14M38 17L26 31l12 14" /> },
  { name: "缩小", tone: "bg-[#fd8b54]/12 text-[#e05a12]", icon: <path d="M16 31h30" /> },
  { name: "放大", tone: "bg-[#fd8b54]/12 text-[#e05a12]", icon: <path d="M16 31h30M31 16v30" /> },
  { name: "左移", tone: "bg-[#fd8b54]/12 text-[#e05a12]", icon: <path d="M37 17L22 31l15 14" /> },
  { name: "右移", tone: "bg-black/5 text-[#666]", icon: <path d="M26 17l14 14-14 14" /> },
  { name: "全屏", tone: "bg-[#fd8b54]/12 text-[#e05a12]", icon: <path d="M29 17H17v11M17 17l11 11M33 45h12V34M45 45L34 34" /> },
]

function PriceChart() {
  return (
    <div className="relative">
      <svg viewBox="0 0 1055 489" className="block w-full overflow-hidden" fill="none">
        <rect x="1" y="1" width="1053" height="487" stroke="#e4e4e4" strokeWidth="2" fill="#fff" />
        <text x="342" y="283" fontSize="94" fontWeight="900" fill="#f7f7f7">
          东方财富
        </text>
        <path d="M0 122.500H1055M0 244.500H1055M0 366.500H1055" stroke="#ddd" strokeWidth="1.500" strokeDasharray="2 2" />
        <rect x="1016" y="305" width="38" height="21" fill="#dcdcdc" />
        <path d="M670 413H1054" stroke="#ccc" strokeWidth="1.500" />
        <path d="M0 422H1055" stroke="#c9824f" strokeWidth="1.500" strokeDasharray="5 3" />
        <g fill="#8a8a8a" fontSize="36">
          <text x="2" y="39">16.49</text>
          <text x="2" y="122">13.19</text>
          <text x="2" y="244">9.90</text>
          <text x="2" y="366">6.60</text>
          <text x="2" y="484">3.30</text>
        </g>
        {CANDLES.map((c, i) => (
          <path key={i} d={`M${px(c.x)} ${py(c.high)}V${py(c.low)}`} stroke={c.color} strokeWidth="3" />
        ))}
        <path d={smooth(MA5.map(([x, y]) => [px(x), py(y)]))} stroke="#222" strokeWidth="2.500" />
        <path d={smooth(MA10.map(([x, y]) => [px(x), py(y)]))} stroke="#f3b83f" strokeWidth="2.500" />
        <path d={smooth(MA20.map(([x, y]) => [px(x), py(y)]))} stroke="#c91583" strokeWidth="2.500" />
        <path d="M22 448L10 457l12 9M28 456H90" stroke="#222" strokeWidth="2" strokeDasharray="14 3" />
        <text x="90" y="468" fontSize="34" fill="#222">5.31</text>
        <path d="M260 15l-16 9 16 9M264 24h14" stroke="#222" strokeWidth="2.500" />
        <text x="278" y="37" fontSize="35" fill="#222">16.49</text>
        <SignalMarkers />
        <g fill="#f3211f">
          <circle cx="90" cy="470" r="8" />
          <circle cx="230" cy="470" r="8" />
          <path d="M614 470a8 8 0 0 0 16 0z" />
          <circle cx="1047" cy="470" r="8" />
        </g>
      </svg>
      <div className="absolute bottom-[11px] left-[2.700%] flex w-[82.500%] justify-between">
        {TOOLS.map((tool) => (
          <button key={tool.name} type="button" aria-label={tool.name} className={`size-[62px] rounded-full ${tool.tone}`}>
            <svg viewBox="0 0 62 62" fill="none" stroke="currentColor" strokeWidth="2.5">
              {tool.icon}
            </svg>
          </button>
        ))}
      </div>
    </div>
  )
}

function VolumeChart() {
  return (
    <svg viewBox="0 0 1055 170" className="block w-full" fill="none">
      <rect x="1" y="1" width="1053" height="168" stroke="#e4e4e4" strokeWidth="2" />
      {VOLUME.map((bar, i) => {
        const x = 1.4 + i * 4.001
        const top = vy(bar.top)
        return bar.up ? (
          <g key={i}>
            <rect x={x - 2.4} y={top} width="4.800" height={169 - top} fill={RED} />
            <rect x={x - 0.5} y={top + 3} width="1" height={Math.max(0, 164 - top)} fill="#ee8480" />
          </g>
        ) : (
          <rect key={i} x={x - 1.5} y={top} width="3" height={169 - top} fill={GREEN} />
        )
      })}
      <text x="2" y="46" fontSize="34" fill="#8a8a8a">
        242.4万
      </text>
      <path d={smooth(VOL_MA1.map(([x, y]) => [px(x), vy(y)]))} stroke="#f0bd22" strokeWidth="2.500" />
      <path d={smooth(VOL_MA2.map(([x, y]) => [px(x), vy(y)]))} stroke="#d32ed3" strokeWidth="2.500" />
      <path d={smooth(VOL_MA3.map(([x, y]) => [px(x), vy(y)]))} stroke="#159415" strokeWidth="2.500" />
    </svg>
  )
}

function RsiChart() {
  return (
    <svg viewBox="0 0 1055 170" className="block w-full" fill="none">
      <rect x="1" y="1" width="1053" height="168" stroke="#e4e4e4" strokeWidth="2" />
      <path d="M2 120.500H1053" stroke="#d4d4d4" strokeWidth="1.500" strokeDasharray="12 6" />
      <g fontSize="34" fill="#8a8a8a">
        <text x="3" y="40">75.58</text>
        <text x="3" y="165">39.64</text>
        <text x="1018" y="120" fontSize="30" fill="#ccc">50</text>
      </g>
      <path d={straight(RSI.map(([x, y]) => [wx(x), (y - 138) / 3]))} stroke="#cf2fc5" strokeWidth="3" strokeLinejoin="round" />
    </svg>
  )
}

function FlowChart() {
  return (
    <svg viewBox="0 0 1055 170" className="block w-full" fill="none">
      <rect x="1" y="1" width="1053" height="168" stroke="#e4e4e4" strokeWidth="2" />
      <path d="M0 96.500H1055" stroke={GREEN} strokeWidth="1" strokeDasharray="3 1" />
      {[...FLOW, ...SMALL_FLOW].map(([x, y], i) => (
        <path key={i} d={`M${wx(x)} 96V${(y - 188) / 3}`} stroke={y < 477 ? RED : GREEN} strokeWidth="3" />
      ))}
      <g fontSize="34" fill="#8a8a8a">
        <text x="4" y="40">3.21亿</text>
        <text x="4" y="166">-2.44亿</text>
      </g>
      <path d={straight(FLOW_MA1.map(([x, y]) => [wx(x), (y - 188) / 3]))} stroke="#f0bd22" strokeWidth="1" />
      <path d={straight(FLOW_MA2.map(([x, y]) => [wx(x), (y - 188) / 3]))} stroke="#d32ed3" strokeWidth="1" />
    </svg>
  )
}

function Charts() {
  return (
    <main className="pl-3 pr-[13px]">
      <div className="flex h-[55px] items-center whitespace-nowrap pl-1 text-[32px]">
        <IndicatorSelect label="主图指标" options={["均线", "BOLL"]} className="mr-3 w-[98px]" />
        <Reading text="MA5:11.38" up className="text-[#222]" />
        <Reading text="10:10.90" up className="text-[#f3b83f]" />
        <Reading text="20:9.34" up className="text-[#c91583]" />
        <button type="button" className="relative ml-auto h-[42px] w-[118px] rounded-lg border-2 border-[#e8eaed] bg-[#f7f8fa] pr-3 text-[32px] leading-[38px] text-[#222]">
          DK点
          <svg viewBox="0 0 10 10" className="absolute bottom-1 right-1 size-2.5" fill="#222">
            <path d="M10 0v10H0z" />
          </svg>
        </button>
        <button type="button" className="ml-[38px] mr-0.5 h-[42px] w-[122px] rounded-lg border-2 border-[#e8eaed] bg-[#f7f8fa] text-[32px] leading-[38px] text-[#222]">
          前复权
        </button>
      </div>
      <PriceChart />
      <div className="flex h-[57px] items-center gap-3 whitespace-nowrap pl-1 text-[32px]">
        <IndicatorSelect label="副图一" options={["成交量", "成交额"]} className="-mr-2 w-[139px]" />
        <Reading text="30.63万" className="text-[#222]" />
        <Reading text="MA1:43.85万" className="text-[#efc01d]" />
        <Reading text="MA2:51.37万" up className="text-[#d42bd8]" />
        <Reading text="MA3:30.81万" up className="text-[#0f960f]" />
      </div>
      <VolumeChart />
      <div className="flex h-[57px] items-center gap-2 whitespace-nowrap pl-1 text-[34px]">
        <IndicatorSelect label="副图二" options={["RSI", "KDJ", "MACD"]} className="-mr-1.5 w-[89px]" />
        <Reading text="RSI1:59.37" className="text-[#222]" />
        <Reading text="RSI2:59.37" className="text-[#efc01d]" />
        <Reading text="RSI3:59.37" className="text-[#d42bd8]" />
      </div>
      <RsiChart />
      <div className="flex h-[57px] items-center gap-5 whitespace-nowrap pl-1 text-[34px]">
        <IndicatorSelect label="副图三" options={["资金趋势", "主力资金"]} className="-mr-4 w-[172px]" />
        <Reading text="-4239万" up className="text-[#222]" />
        <Reading text="MA1:-3050万" className="text-[#efc01d]" />
        <Reading text="MA2:-1198万" className="text-[#d42bd8]" />
      </div>
      <FlowChart />
      <div className="mt-0.5 h-[77px] bg-[#f7f8fa] text-[34px] text-[#666]">
        <div className="flex h-[13px] justify-between pl-[340px]">
          <span className="w-0.5 bg-[#555]" />
          <span className="w-0.5 bg-[#555]" />
          <span className="w-0.5 bg-[#555]" />
        </div>
        <div className="grid grid-cols-[264fr_354fr_437fr] pl-1.5 leading-[46px]">
          <time>20240730</time>
          <time>20241205</time>
          <span className="flex justify-between">
            <time>20250422</time>
            <time>20250829</time>
          </span>
        </div>
      </div>
    </main>
  )
}

function Banner() {
  return (
    <aside className="mx-[17px] mt-4 flex h-[83px] items-center rounded-full bg-[#fceee5] pl-7 pr-[30px] text-[#e05a12]">
      <svg viewBox="0 0 42 38" className="h-[38px] w-[42px]" fill="#ea5504">
        <path d="M0 11h4v15H0zM8 10L41 0v38L30 33q-2 4-8 3-6-2-5-7l-9-3z" />
      </svg>
      <a href="#invite" className="ml-[50px] whitespace-nowrap text-[36px]">
        邀好友得红包，多邀多得！微信秒速打款&gt;&gt;
      </a>
      <span className="ml-auto h-8 w-0.5 bg-[#e9905f]" />
      <button type="button" aria-label="关闭" className="ml-2.5">
        <Close className="size-10 stroke-[1.6]" />
      </button>
    </aside>
  )
}

const ACTIONS: { label: string; badge?: boolean; icon: ReactNode }[] = [
  {
    label: "交易",
    icon: (
      <>
        <path d="M15 8a25 25 0 0 1 39 32M47 48A25 25 0 0 1 9 18" />
        <path d="M2 21l7-4 2 8M60 37l-7 4-1-8" />
        <path d="M22 15l9 13 9-13M31 28v18M22 28h18M22 36h18" />
      </>
    ),
  },
  {
    label: "发帖",
    icon: (
      <>
        <path d="M41 4H13q-6 0-6 6v38q0 6 6 6h36q6 0 6-6V21" />
        <path d="M47 11l5 4-22 24-7 4 2-8zM50 7l3-3 4 4-3 4z" fill="#666" strokeWidth="1" />
      </>
    ),
  },
  {
    label: "功能",
    badge: true,
    icon: (
      <>
        <rect x="8" y="6" width="20" height="20" rx="3" />
        <rect x="8" y="33" width="20" height="20" rx="3" />
        <rect x="34" y="33" width="20" height="20" rx="3" />
        <path d="M44 4l12 13-12 12-12-12z" />
      </>
    ),
  },
  {
    label: "设自选",
    icon: (
      <>
        <circle cx="31" cy="29" r="25" />
        <g fill="#666" stroke="none">
          <circle cx="20" cy="29" r="2.800" />
          <circle cx="31" cy="29" r="2.800" />
          <circle cx="42" cy="29" r="2.800" />
        </g>
      </>
    ),
  },
]

function BottomBar() {
  return (
    <footer>
      <div className="mt-[15px] border-t-2 border-[#ddd] pt-1.5">
        <nav className="grid h-[126px] grid-cols-[252fr_207fr_207fr_207fr_207fr] border-t-2 border-[#d4d6d8] bg-[#f7f8fa] text-[32px] text-[#666]">
          <a href="#index" className="flex flex-col items-center pt-2">
            <svg viewBox="0 0 20 8" className="h-2 w-5" fill="#777">
              <path d="M10 0l10 8H0z" />
            </svg>
            <span className="mt-1.5 text-[36px] leading-[46px] text-[#df2c2c]">3857.93</span>
            <span className="flex w-full items-center justify-between pl-[38px] pr-2.5 leading-[46px]">
              上证
              <span className="text-[34px] text-[#df2c2c]">0.37%</span>
            </span>
          </a>
          {ACTIONS.map((action) => (
            <a key={action.label} href="#action" className="relative flex flex-col items-center pt-2">
              <svg viewBox="0 0 62 58" className="h-[58px] w-[62px]" fill="none" stroke="#666" strokeWidth="2.8" strokeLinejoin="round">
                {action.icon}
              </svg>
              <span className="leading-[62px]">{action.label}</span>
              {action.badge && <span className="absolute left-[140px] top-0.5 size-4 rounded-full bg-[#f3211f]" />}
            </a>
          ))}
        </nav>
      </div>
      <div className="flex h-[128px] items-center pl-[279px] text-[#777]">
        <button type="button" aria-label="最近任务">
          <svg viewBox="0 0 40 40" className="size-10" stroke="currentColor" strokeWidth="5" strokeLinecap="round">
            <path d="M3 5h34M3 20h34M3 35h34" />
          </svg>
        </button>
        <button type="button" aria-label="主屏幕" className="ml-[196px]">
          <svg viewBox="0 0 40 40" className="size-10" fill="none" stroke="currentColor" strokeWidth="4">
            <rect x="2" y="2" width="36" height="36" rx="9" />
          </svg>
        </button>
        <button type="button" aria-label="后退" className="ml-[196px]">
          <svg viewBox="0 0 40 40" className="size-10" fill="none" stroke="currentColor" strokeWidth="4" strokeLinecap="round">
            <path d="M31 2L10 17q-4 3 0 6l21 15" />
          </svg>
        </button>
      </div>
    </footer>
  )
}

export default function App() {
  return (
    <div className="min-h-screen bg-[#fefefe] font-['Roboto','Noto_Sans_CJK_SC',sans-serif]">
      <StatusBar />
      <Header />
      <QuotePanel />
      <AlertBar />
      <PeriodTabs />
      <Charts />
      <Banner />
      <BottomBar />
    </div>
  )
}
